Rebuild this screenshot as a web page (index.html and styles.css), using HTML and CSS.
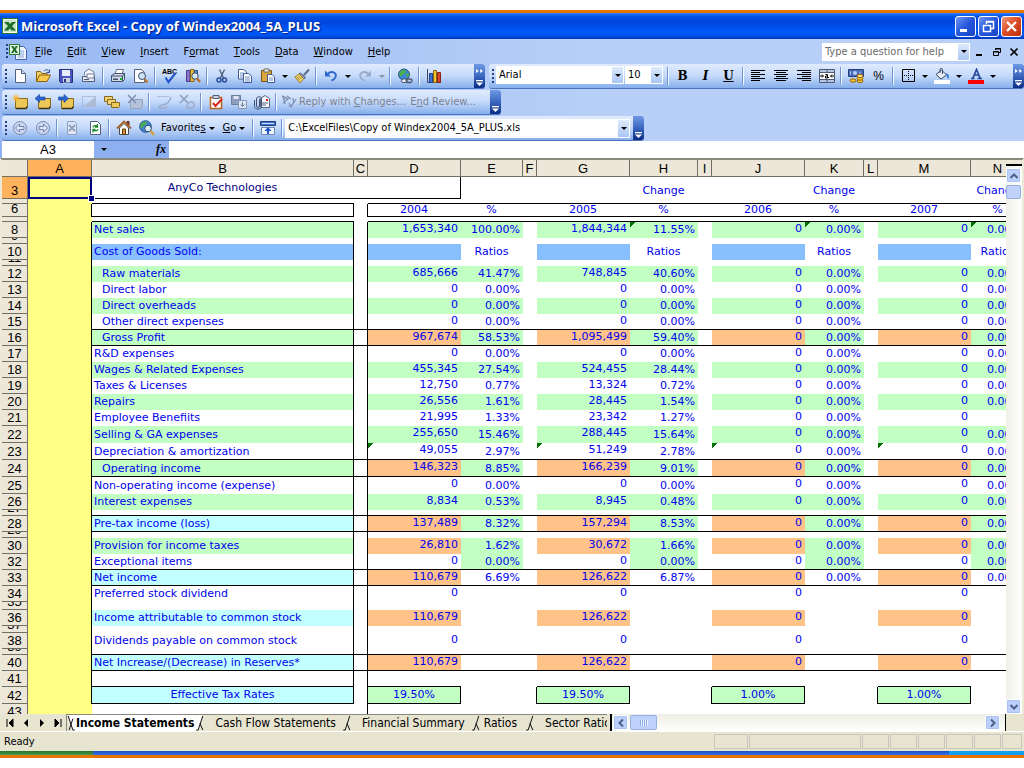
FILE: index.html
```html
<!DOCTYPE html>
<html lang="en">
<head>
    <meta charset="UTF-8">
    <meta name="viewport" content="width=device-width, initial-scale=1.0">
    <title>Microsoft Excel - Copy of Windex2004_5A_PLUS</title>
    <link rel="stylesheet" href="styles.css">
</head>
<body>

    <div class="window">
        <header class="titlebar">
            <svg class="app-icon" viewBox="0 0 16 16"><rect x="0.5" y="0.5" width="15" height="15" fill="#f4faf0" stroke="#2c7a34"/><rect x="2" y="2" width="12" height="12" fill="#c9e5c4"/><path d="M2 4h4.500l1.500 2L10 4h4l-4 4 4 4.500H9.500L8 10.500l-2 2H2l4-4.500z" fill="#1c6e2a"/></svg>
            <h1>Microsoft Excel - Copy of Windex2004_5A_PLUS</h1>
            <div class="window-buttons">
                <button type="button" aria-label="Minimize"><svg viewBox="0 0 19 19"><path d="M4 12h7v3H4z" fill="#fff"/></svg></button>
                <button type="button" aria-label="Restore"><svg viewBox="0 0 19 19"><path d="M7.500 7V4.500h7v7H12M7 5h8" fill="none" stroke="#fff" stroke-width="1.500"/><path d="M4.500 8.500h7v6h-7zM4 8.500h8" fill="none" stroke="#fff" stroke-width="1.500"/></svg></button>
                <button type="button" class="close" aria-label="Close"><svg viewBox="0 0 19 19"><path d="M5 5l9 9M14 5l-9 9" stroke="#fff" stroke-width="2.400"/></svg></button>
            </div>
        </header>

        <nav class="menubar">
            <span class="grip"></span>
            <svg class="doc-icon" viewBox="0 0 18 16"><path d="M6.500 2.500h8l3 3v10h-11z" fill="#eef4ff" stroke="#3f64a8"/><path d="M9 7h6M9 9h6M9 11h6M9 13h6" stroke="#89a5d8"/><rect x="0.500" y="0.500" width="10" height="10" fill="#e6f3e2" stroke="#2c7a34"/><path d="M2 2h2.500l1 2 1.200-2H9L6.800 5.500 9 9H6.500l-1-2-1.200 2H2l2.300-3.500z" fill="#1c6e2a"/></svg>
            <button type="button"><u>F</u>ile</button>
            <button type="button"><u>E</u>dit</button>
            <button type="button"><u>V</u>iew</button>
            <button type="button"><u>I</u>nsert</button>
            <button type="button">F<u>o</u>rmat</button>
            <button type="button"><u>T</u>ools</button>
            <button type="button"><u>D</u>ata</button>
            <button type="button"><u>W</u>indow</button>
            <button type="button"><u>H</u>elp</button>
            <div class="combo help">
                <input type="text" aria-label="Help question" placeholder="Type a question for help">
                <span class="drop"><i class="caret"></i></span>
            </div>
            <div class="doc-buttons">
                <button type="button" aria-label="Minimize workbook"><svg viewBox="0 0 10 10"><path d="M1 7h6v2H1z"/></svg></button>
                <button type="button" aria-label="Restore workbook"><svg viewBox="0 0 10 10"><path d="M3.500 3V1.500h5v4H7M3 2h6" fill="none" stroke="#000"/><path d="M1.500 4.500h5v4h-5zM1 5h6" fill="none" stroke="#000"/></svg></button>
                <button type="button" aria-label="Close workbook"><svg viewBox="0 0 10 10"><path d="M1.500 1.500l7 7M8.500 1.500l-7 7" stroke="#000" stroke-width="1.600"/></svg></button>
            </div>
        </nav>

        <div class="toolbar-row">
            <div class="toolbar standard">
                <span class="grip"></span>
                <button type="button" aria-label="New"><svg viewBox="0 0 16 16"><path d="M3.500 1.500h6l4 4v9h-10z" fill="#fff" stroke="#51617f"/><path d="M9.500 1.500v4h4" fill="#c9d6ee" stroke="#51617f"/></svg></button>
                <button type="button" aria-label="Open"><svg viewBox="0 0 16 16"><path d="M1.500 13.500v-10h4l1.500 2h5v2" fill="#f4cf63" stroke="#8a6414"/><path d="M1.500 13.500l3-6.500h11l-3.500 6.500z" fill="#fbc94b" stroke="#8a6414"/><path d="M9 3c2-2 4-1.500 5 .5M14.500 1.500v3h-3" fill="none" stroke="#35558f"/></svg></button>
                <button type="button" aria-label="Save"><svg viewBox="0 0 16 16"><path d="M1.500 1.500h13v13h-12l-1-1z" fill="#4a55c0" stroke="#26307e"/><path d="M4 2h8v6H4z" fill="#e9edfb"/><path d="M5 10h7v4.500H5z" fill="#cdd3e2"/><path d="M6 11h2v3H6z" fill="#26307e"/></svg></button>
                <button type="button" aria-label="Permission"><svg viewBox="0 0 16 16"><path d="M3.500 7V4L8 1l5 3v4" fill="#f6f8fd" stroke="#6f7d99"/><path d="M1.500 8.500h12v5h-12z" fill="#e4e8f0" stroke="#4e5c7c"/><path d="M6 6h7v4H6z" fill="#fff" stroke="#6f7d99"/><path d="M3 11.500h5" stroke="#4e5c7c"/></svg></button>
                <span class="sep"></span>
                <button type="button" aria-label="Print"><svg viewBox="0 0 16 16"><path d="M5 6l1.500-4.500h7L12 6" fill="#fff" stroke="#5c6b8a"/><path d="M1.500 7.500l3-2h10v6l-2 2h-11z" fill="#d3d9e6" stroke="#40506f"/><path d="M1.500 8h11v5.500M12.500 8l2-2.500" fill="none" stroke="#40506f"/><path d="M3 10.500h5v1.500H3z" fill="#40506f"/><path d="M10 10h2v2h-2z" fill="#18b52c"/></svg></button>
                <button type="button" aria-label="Print preview"><svg viewBox="0 0 16 16"><path d="M1.500 1.500h7l3 3v10h-10z" fill="#fff" stroke="#51617f"/><circle cx="9" cy="8" r="3.500" fill="#cfe6f7" stroke="#3a4a68"/><path d="M11.500 11l3 3.500" stroke="#b8762a" stroke-width="2.400"/></svg></button>
                <span class="sep"></span>
                <button type="button" aria-label="Spelling" class="spell"><svg viewBox="0 0 16 16"><text x="0" y="6" class="abc">ABC</text><path d="M3.500 9.500l3 4.500 7-9" fill="none" stroke="#2559cf" stroke-width="2.200"/></svg></button>
                <button type="button" aria-label="Research"><svg viewBox="0 0 16 16"><path d="M1.500 2.500h3.500v11H1.500z" fill="#8c76cb" stroke="#4a3b88"/><path d="M5.500 1.500h3.500v12H5.500z" fill="#e6c047" stroke="#8a6414"/><path d="M9.500 2.500h3v8h-3z" fill="#5c93d4" stroke="#2d4f88"/><circle cx="10" cy="8" r="3.200" fill="#d5ebf8" stroke="#3a4a68"/><path d="M12 10.500l3 3.500" stroke="#b8762a" stroke-width="2.400"/></svg></button>
                <span class="sep"></span>
                <button type="button" aria-label="Cut"><svg viewBox="0 0 16 16"><path d="M5.500 1.500L9.500 10M10.500 1.500L6.500 10" stroke="#53637f" stroke-width="1.400"/><circle cx="5" cy="12" r="2" fill="none" stroke="#2a4f9c" stroke-width="1.500"/><circle cx="10.500" cy="12" r="2" fill="none" stroke="#2a4f9c" stroke-width="1.500"/></svg></button>
                <button type="button" aria-label="Copy"><svg viewBox="0 0 16 16"><path d="M1.500 1.500h5l3 2.500v7h-8z" fill="#fff" stroke="#3c5a9a"/><path d="M3 5h4M3 7h4M3 9h3" stroke="#6d8cc9"/><path d="M6.500 5.500h5l3 2.500v6.500h-8z" fill="#fff" stroke="#3c5a9a"/><path d="M8 9h5M8 11h5M8 13h5" stroke="#6d8cc9"/></svg></button>
                <button type="button" aria-label="Paste"><svg viewBox="0 0 16 16"><path d="M1.500 2.500h10v11h-10z" fill="#dba63f" stroke="#7a5514"/><path d="M4 1h5v3H4z" fill="#f2f2e4" stroke="#666"/><path d="M7.500 6.500h4.500l2.500 2.500v5.500h-7z" fill="#fff" stroke="#3c5a9a"/><path d="M9 10h4M9 12h4" stroke="#6d8cc9"/></svg></button>
                <button type="button" class="arrow" aria-label="Paste options"><i class="caret"></i></button>
                <button type="button" aria-label="Format painter"><svg viewBox="0 0 16 16"><path d="M15 1.500L10 7" stroke="#5f6f90" stroke-width="2.200"/><path d="M6.500 5l5 4.500-1.500 1.500-5-5z" fill="#8e9ab3" stroke="#4f5d7a"/><path d="M5 6l4.500 4.500L6 15 1 9z" fill="#f6dd7c" stroke="#a37c1d"/><path d="M3 9l3 3.500M4.500 8l3 3" stroke="#a37c1d"/></svg></button>
                <span class="sep"></span>
                <button type="button" aria-label="Undo"><svg viewBox="0 0 16 16"><path d="M4.500 6c4-4 9.500-1.500 8 3-.8 2-2 3-4 3.500" fill="none" stroke="#2f66cf" stroke-width="2"/><path d="M2 2.500v6h6z" fill="#2f66cf"/></svg></button>
                <button type="button" class="arrow" aria-label="Undo list"><i class="caret"></i></button>
                <button type="button" aria-label="Redo"><svg viewBox="0 0 16 16"><path d="M11.500 6c-4-4-9.500-1.500-8 3 .8 2 2 3 4 3.500" fill="none" stroke="#9aabc9" stroke-width="2"/><path d="M14 2.500v6H8z" fill="#9aabc9"/></svg></button>
                <button type="button" class="arrow" aria-label="Redo list"><i class="caret dim"></i></button>
                <span class="sep"></span>
                <button type="button" aria-label="Hyperlink"><svg viewBox="0 0 16 16"><circle cx="7" cy="6.500" r="5.500" fill="#3f83d8" stroke="#265391"/><path d="M4 3c2-2 4-1 5 0s-1 2-2 3-3 1-3 3c-3-2-2-4 0-6zM9 6l3-1c.5 2-.5 4-2 5z" fill="#49b04d"/><rect x="4.500" y="11" width="6" height="3.500" rx="1.700" fill="#e8ecf3" stroke="#4d5970"/><rect x="9" y="11" width="6" height="3.500" rx="1.700" fill="none" stroke="#4d5970" stroke-width="1.300"/></svg></button>
                <span class="sep"></span>
                <button type="button" aria-label="Chart wizard"><svg viewBox="0 0 16 16"><path d="M1.500 1v13.500H15" fill="none" stroke="#3a4a68"/><path d="M3.500 5.500h3v9h-3z" fill="#3c6fd8" stroke="#234489"/><path d="M7.500 2.500h3v12h-3z" fill="#f2c230" stroke="#8a6414"/><path d="M11.500 4.500h3v10h-3z" fill="#d8472c" stroke="#8a2412"/></svg></button>
                <span class="cap"><i class="chevrons"></i><i class="more"></i></span>
            </div>

            <div class="toolbar formatting">
                <span class="grip"></span>
                <div class="combo font-name">
                    <select aria-label="Font"><option>Arial</option></select>
                    <span class="drop"><i class="caret"></i></span>
                </div>
                <div class="combo font-size">
                    <select aria-label="Font size"><option>10</option></select>
                    <span class="drop"><i class="caret"></i></span>
                </div>
                <span class="sep"></span>
                <button type="button" class="letter" aria-label="Bold"><b>B</b></button>
                <button type="button" class="letter" aria-label="Italic"><b><em>I</em></b></button>
                <button type="button" class="letter" aria-label="Underline"><b><u>U</u></b></button>
                <span class="sep"></span>
                <button type="button" aria-label="Align left"><svg viewBox="0 0 16 16"><path d="M1 2.500h14M1 4.500h9M1 6.500h14M1 8.500h9M1 10.500h14M1 12.500h9" stroke="#000"/></svg></button>
                <button type="button" aria-label="Center"><svg viewBox="0 0 16 16"><path d="M1 2.500h14M3 4.500h10M1 6.500h14M3 8.500h10M1 10.500h14M3 12.500h10" stroke="#000"/></svg></button>
                <button type="button" aria-label="Align right"><svg viewBox="0 0 16 16"><path d="M1 2.500h14M6 4.500h9M1 6.500h14M6 8.500h9M1 10.500h14M6 12.500h9" stroke="#000"/></svg></button>
                <button type="button" aria-label="Merge and center"><svg viewBox="0 0 16 16"><path d="M.5 1.500h15v13H.5z" fill="#fff" stroke="#4c5a78"/><path d="M1 2h14v2H1zM1 12h14v2H1z" fill="#b4c6e6"/><path d="M0 4.500h16M0 11.500h16M8 1v3M8 12v3" stroke="#4c5a78"/><path d="M1 8h3M12 8h3M3 6.500L4.500 8 3 9.500M13 6.500L11.500 8l1.500 1.500" fill="none" stroke="#000"/><path d="M6.500 6.500h2v3.500h-2V8h2M8.500 9.500H10" fill="none" stroke="#000"/></svg></button>
                <span class="sep"></span>
                <button type="button" aria-label="Currency"><svg viewBox="0 0 16 16"><path d="M.5 1.500h15v7H.5z" fill="#486bb8" stroke="#24407e"/><circle cx="7" cy="5" r="2" fill="#b9cdf2"/><path d="M2.500 3.500v3M12 3.500v3" stroke="#b9cdf2"/><ellipse cx="12" cy="13" rx="3" ry="1.700" fill="#f5c231" stroke="#93660f"/><ellipse cx="12" cy="10.500" rx="3" ry="1.700" fill="#f5c231" stroke="#93660f"/><ellipse cx="12" cy="8" rx="3" ry="1.700" fill="#ffe07a" stroke="#93660f"/><ellipse cx="5" cy="12.500" rx="3" ry="1.700" fill="#f5c231" stroke="#93660f"/></svg></button>
                <button type="button" class="percent" aria-label="Percent style">%</button>
                <span class="sep"></span>
                <button type="button" aria-label="Borders"><svg viewBox="0 0 16 16"><path d="M2.500 1.500h12v12h-12z" fill="none" stroke="#000"/><path d="M4 7.500h10M8.500 3v10" stroke="#000" stroke-dasharray="1 1"/></svg></button>
                <button type="button" class="arrow" aria-label="Border list"><i class="caret"></i></button>
                <button type="button" aria-label="Fill color"><svg viewBox="0 0 16 16"><path d="M2 6.500l5.500-4.500 5 5L7 11z" fill="#e8eef8" stroke="#3a4a68"/><path d="M6 5V1.500c0-1.500 2.500-1.500 2.500 0V6" fill="none" stroke="#3a4a68"/><path d="M12 5c3 1 3.500 3 2.500 6-1-1-2-2-2-4z" fill="#3c7ad8"/><path d="M0 12h16v4H0z" fill="#fff"/></svg></button>
                <button type="button" class="arrow" aria-label="Fill color list"><i class="caret"></i></button>
                <button type="button" aria-label="Font color"><svg viewBox="0 0 16 16"><path d="M3 10.500h3.500M9.500 10.500H14M5 10L8.500 1.500 12 10M6 7h5" fill="none" stroke="#27479a" stroke-width="1.700"/><path d="M0 12h16v4H0z" fill="#f00"/></svg></button>
                <button type="button" class="arrow" aria-label="Font color list"><i class="caret"></i></button>
                <span class="cap"><i class="chevrons"></i><i class="more"></i></span>
            </div>
        </div>

        <div class="toolbar-row">
            <div class="toolbar reviewing">
                <span class="grip"></span>
                <button type="button" aria-label="New comment"><svg viewBox="0 0 16 16"><path d="M3.500 4.500h12v8l-2 2h-10z" fill="#ecc858" stroke="#8a6a1c"/><path d="M4 14.500h10l1.500-2" fill="none" stroke="#3c300c" stroke-width="1.500"/><path d="M4 0v8M0 4h8M1.500 1.500l5 5M6.500 1.500l-5 5" stroke="#ffb326"/></svg></button>
                <button type="button" aria-label="Previous comment"><svg viewBox="0 0 16 16"><path d="M3.500 4.500h12v8l-2 2h-10z" fill="#ecc858" stroke="#8a6a1c"/><path d="M4 14.500h10l1.500-2" fill="none" stroke="#3c300c" stroke-width="1.500"/><path d="M0 4.500L4.500.5v2.500H10v3H4.500v2.500z" fill="#2c68d8" stroke="#16418f" stroke-width=".6"/></svg></button>
                <button type="button" aria-label="Next comment"><svg viewBox="0 0 16 16"><path d="M3.500 4.500h12v8l-2 2h-10z" fill="#ecc858" stroke="#8a6a1c"/><path d="M4 14.500h10l1.500-2" fill="none" stroke="#3c300c" stroke-width="1.500"/><path d="M10.500 4.500L6 .5v2.500H.5v3H6v2.500z" fill="#2c68d8" stroke="#16418f" stroke-width=".6"/></svg></button>
                <button type="button" disabled aria-label="Show comment"><svg viewBox="0 0 16 16"><path d="M1.500 2.500h13v10h-13z" fill="none" stroke="#8d9dbd" stroke-dasharray="1 1"/><path d="M2 13L14 3v10z" fill="#aebbd4"/></svg></button>
                <button type="button" aria-label="Show all comments"><svg viewBox="0 0 16 16"><path d="M.5 2.500h8v4l-1 1h-7z" fill="#f2d374" stroke="#8a6a1c"/><path d="M3.500 5.500h8v4l-1 1h-7z" fill="#f2d374" stroke="#8a6a1c"/><path d="M7.500 8.500h8v4l-1 1h-7z" fill="#ecc858" stroke="#8a6a1c"/></svg></button>
                <button type="button" disabled aria-label="Delete comment"><svg viewBox="0 0 16 16"><path d="M3.500 5.500h12v7l-2 2h-10z" fill="#b6c2da" stroke="#93a2c0"/><path d="M1 1l8 8M9 1L1 9" stroke="#7f8fb0" stroke-width="1.500"/></svg></button>
                <span class="sep"></span>
                <button type="button" disabled aria-label="Show ink"><svg viewBox="0 0 16 16"><path d="M1.500 2.500h12" stroke="#8d9dbd" stroke-dasharray="1 1"/><path d="M15 3c-1 4-4 7-8 8-4 0-6 3-2 3 3 0 7 0 5-2" fill="none" stroke="#9fadc9" stroke-width="1.400"/></svg></button>
                <button type="button" disabled aria-label="Delete ink"><svg viewBox="0 0 16 16"><path d="M1 1l8 8M9 1L1 9" stroke="#8d9dbd" stroke-width="1.500"/><path d="M8 12c2-6 7-5 7-1 0 3-4 4-8 2" fill="none" stroke="#9fadc9" stroke-width="1.500"/></svg></button>
                <span class="sep"></span>
                <button type="button" aria-label="Create task"><svg viewBox="0 0 16 16"><path d="M2.500 3.500h11v11h-11z" fill="#fff" stroke="#b8651f" stroke-width="1.500"/><path d="M5 1.500h6v3H5z" fill="#c9d2e4" stroke="#52617f"/><path d="M5 9l2.500 3L14 5" fill="none" stroke="#d8261c" stroke-width="2"/></svg></button>
                <button type="button" disabled aria-label="Update file"><svg viewBox="0 0 16 16"><path d="M.5 1.500h9v9h-9z" fill="#8f9fc0" stroke="#6d7d9f"/><path d="M2.500 2h5v3h-5z" fill="#dfe6f3"/><path d="M7.500 6.500h8v8h-8z" fill="#dfe6f3" stroke="#8797b8"/><path d="M11.500 8v4M9.500 10.500l2 2 2-2" fill="none" stroke="#6d7d9f"/></svg></button>
                <button type="button" aria-label="Send as attachment"><svg viewBox="0 0 16 16"><path d="M6.500 4.500l4.500-3 4.500 3v9h-9z" fill="#f4f7fd" stroke="#5a6987"/><path d="M8 9h6M8 11h4" stroke="#5a6987"/><path d="M12 5h2v2h-2z" fill="#d8261c"/><path d="M5.500 5v7c0 2-3 2-3 0V5c0-3 5-3 5 0v7.500c0 3.500-7 3.500-7 0V6" fill="none" stroke="#44516e"/></svg></button>
                <span class="sep"></span>
                <button type="button" class="text" disabled><svg viewBox="0 0 16 16"><path d="M1 2l6 3-5 4M2 2l2 8M6 2l4 3" fill="none" stroke="#8594b2" stroke-width="1.500"/><path d="M8 12c5 0 5-4 4-8M8 9l2 4 5-8" fill="none" stroke="#8594b2" stroke-width="1.300"/></svg><span>Reply with <u>C</u>hanges...</span></button>
                <button type="button" class="text" disabled><span>E<u>n</u>d Review...</span></button>
                <span class="cap"><i class="more"></i></span>
            </div>
        </div>

        <div class="toolbar-row">
            <div class="toolbar web">
                <span class="grip"></span>
                <button type="button" disabled aria-label="Back"><svg viewBox="0 0 16 16"><circle cx="8" cy="8" r="6.500" fill="#cbd8ef" stroke="#7a8bb0"/><path d="M3.500 8l4-4v2.500H12v3H7.500V12z" fill="#dce6f7" stroke="#7182a8"/></svg></button>
                <button type="button" disabled aria-label="Forward"><svg viewBox="0 0 16 16"><circle cx="8" cy="8" r="6.500" fill="#cbd8ef" stroke="#7a8bb0"/><path d="M12.500 8l-4-4v2.500H4v3h4.500V12z" fill="#dce6f7" stroke="#7182a8"/></svg></button>
                <span class="sep"></span>
                <button type="button" disabled aria-label="Stop"><svg viewBox="0 0 16 16"><path d="M3.500 1.500h7l2 2v11h-9z" fill="#dde6f5" stroke="#8f9fc0"/><path d="M5 5l6 6M11 5l-6 6" stroke="#8f9fc0" stroke-width="1.800"/></svg></button>
                <button type="button" aria-label="Refresh"><svg viewBox="0 0 16 16"><path d="M3.500 1.500h7l3 3v10h-10z" fill="#fff" stroke="#51617f"/><path d="M6 7.500c0-2 3-2.500 4.500-1M10.500 4v3H8M11 9c0 2-3 2.500-4.500 1M6 12.500v-3h2.500" fill="none" stroke="#1f8a2c" stroke-width="1.300"/></svg></button>
                <span class="sep"></span>
                <button type="button" aria-label="Home"><svg viewBox="0 0 16 16"><path d="M11 1.500h2v4h-2z" fill="#b5482b" stroke="#5c2310"/><path d="M3.500 8v6.500h9V8L8 3.500z" fill="#fff" stroke="#4a4a4a"/><path d="M1 8.500l7-7 7 7" fill="none" stroke="#a8632a" stroke-width="1.800"/><path d="M6.500 9h3v5.500h-3z" fill="#d98c2b" stroke="#5c3a10"/></svg></button>
                <button type="button" aria-label="Search the Web"><svg viewBox="0 0 16 16"><circle cx="6.500" cy="6.500" r="5.800" fill="#3f83d8" stroke="#265391"/><path d="M2 4c2-3 5-3 6-2s-1 2-2 3-3 1-2.500 4C1 8 1 6 2 4z" fill="#49b04d"/><circle cx="9" cy="8.500" r="3.300" fill="#d8effa" stroke="#39485f"/><path d="M11.500 11l3.500 4" stroke="#d2a035" stroke-width="2.400"/></svg></button>
                <button type="button" class="text"><span>Favorite<u>s</u></span><i class="caret"></i></button>
                <button type="button" class="text wide"><span><u>G</u>o</span><i class="caret"></i></button>
                <span class="sep"></span>
                <button type="button" aria-label="Show only Web toolbar"><svg viewBox="0 0 16 16"><path d="M.5 1.500h15v4H.5z" fill="#3c6fd0" stroke="#24407e"/><path d="M2 3.500h12" stroke="#cfdef8"/><path d="M1.500 7.500h13v7h-13z" fill="#eef4ff" stroke="#6e88bd"/><path d="M8 7l3.500 4H9v3H7v-3H4.500z" fill="#1f55c4"/></svg></button>
                <span class="sep"></span>
                <div class="combo address">
                    <input type="text" aria-label="Address" value="C:\ExcelFiles\Copy of Windex2004_5A_PLUS.xls">
                    <span class="drop"><i class="caret"></i></span>
                </div>
                <span class="cap"><i class="more"></i></span>
            </div>
        </div>

        <div class="formula-bar">
            <input type="text" class="name-box" aria-label="Name box" value="A3">
            <button type="button" class="name-list" aria-label="Names"><i class="caret"></i></button>
            <button type="button" class="fx" aria-label="Insert function"><em>fx</em></button>
            <input type="text" class="formula" aria-label="Formula">
        </div>

        <main class="workbook">
            <div class="sheet">
                <table>
                    <colgroup>
                        <col class="head"><col class="a"><col class="b"><col class="gap"><col class="amount"><col class="e"><col class="gap"><col class="amount"><col class="h"><col class="gap"><col class="amount"><col class="k"><col class="gap"><col class="amount"><col class="n">
                    </colgroup>
                    <thead>
                        <tr><th></th><th class="active">A</th><th>B</th><th>C</th><th>D</th><th>E</th><th>F</th><th>G</th><th>H</th><th>I</th><th>J</th><th>K</th><th>L</th><th>M</th><th>N</th></tr>
                    </thead>
                    <tbody id="rows"></tbody>
                </table>
            </div>
            <div class="vscroll">
                <span class="split"></span>
                <button type="button" class="scroll-button" aria-label="Scroll up"><svg viewBox="0 0 10 10"><path d="M1.500 7L5 3.500 8.500 7" fill="none" stroke="#4d6185" stroke-width="2"/></svg></button>
                <span class="thumb"></span>
                <button type="button" class="scroll-button last" aria-label="Scroll down"><svg viewBox="0 0 10 10"><path d="M1.500 3L5 6.500 8.500 3" fill="none" stroke="#4d6185" stroke-width="2"/></svg></button>
            </div>
        </main>

        <div class="tab-row">
            <div class="tab-nav">
                <button type="button" aria-label="First sheet"><svg viewBox="0 0 10 10"><path d="M2 1v8M8 1v8L4 5z" stroke="#000"/></svg></button>
                <button type="button" aria-label="Previous sheet"><svg viewBox="0 0 10 10"><path d="M7 1v8L3 5z"/></svg></button>
                <button type="button" aria-label="Next sheet"><svg viewBox="0 0 10 10"><path d="M3 1v8l4-4z"/></svg></button>
                <button type="button" aria-label="Last sheet"><svg viewBox="0 0 10 10"><path d="M8 1v8M2 1v8l4-4z" stroke="#000"/></svg></button>
            </div>
            <div class="tabs">
                <svg class="edge" viewBox="0 0 8 17"><path d="M0 0h8v17H6z" fill="#fff"/><path d="M1 1l5 15h2M6 4L2 16" fill="none" stroke="#000"/></svg>
                <button type="button" class="tab current">Income Statements</button>
                <svg class="edge" viewBox="0 0 8 17"><path d="M0 0h7L2 16H0z" fill="#fff"/><path d="M7 1L2 16H0M4 9l3 7" fill="none" stroke="#000"/></svg>
                <button type="button" class="tab">Cash Flow Statements</button>
                <svg class="edge" viewBox="0 0 8 17"><path d="M7 1L2 16H0M4 9l3 7" fill="none" stroke="#000"/></svg>
                <button type="button" class="tab">Financial Summary</button>
                <svg class="edge" viewBox="0 0 8 17"><path d="M7 1L2 16H0M4 9l3 7" fill="none" stroke="#000"/></svg>
                <button type="button" class="tab narrow">Ratios</button>
                <svg class="edge" viewBox="0 0 8 17"><path d="M7 1L2 16H0M4 9l3 7" fill="none" stroke="#000"/></svg>
                <button type="button" class="tab">Sector Ratios</button>
            </div>
            <div class="hscroll">
                <button type="button" class="scroll-button" aria-label="Scroll left"><svg viewBox="0 0 10 10"><path d="M7 1.500L3.500 5 7 8.500" fill="none" stroke="#4d6185" stroke-width="2"/></svg></button>
                <span class="thumb"></span>
                <button type="button" class="scroll-button last" aria-label="Scroll right"><svg viewBox="0 0 10 10"><path d="M3 1.500L6.500 5 3 8.500" fill="none" stroke="#4d6185" stroke-width="2"/></svg></button>
            </div>
            <span class="corner"></span>
        </div>

        <footer class="status">
            <span class="message">Ready</span>
            <span class="pane short"></span><span class="pane long"></span><span class="pane"></span><span class="pane"></span><span class="pane"></span><span class="pane"></span><span class="pane"></span><span class="pane last"></span>
        </footer>
        <div class="taskbar"><span class="start"></span><span class="tray"></span></div>
    </div>

    <script src="sheet.js"></script>
</body>
</html>
```
FILE: styles.css
```css
* {
    box-sizing: border-box;
}

body {
    margin: 0;
    padding: 10px 0;
    height: 100vh;
    background: #fff;
    font: 11px/14px "DejaVu Sans Condensed", "DejaVu Sans", sans-serif;
    color: #000;
}

button, input, select {
    font: inherit;
    color: inherit;
    margin: 0;
    padding: 0;
    border: none;
    border-radius: 0;
    background: none;
    outline: none;
}

button {
    display: flex;
    align-items: center;
    justify-content: center;
    white-space: nowrap;
}

button u {
    text-underline-offset: 1px;
}

svg {
    display: block;
    flex: none;
}

.window {
    height: 100%;
    display: flex;
    flex-direction: column;
    overflow: hidden;
    border-top: 3px solid #e87400;
    border-bottom: 3px solid #e87400;
    background: #b8d0f7;
}

/* title bar */
.titlebar {
    flex: none;
    height: 26px;
    display: flex;
    align-items: center;
    padding: 0 2px;
    gap: 3px;
    background: linear-gradient(#2a82ff, #0353e8 3px, #0044dd 9px, #0058fa 18px, #0056f4 22px, #0036b8);
}

.app-icon {
    width: 16px;
    height: 16px;
}

h1 {
    flex: 1;
    margin: 0;
    font: bold 13px/20px "Open Sans", "Noto Sans", sans-serif;
    color: #fff;
    text-shadow: 1px 1px 1px #0a1f80;
    white-space: nowrap;
}

.window-buttons {
    display: flex;
    gap: 2px;
}

.window-buttons button {
    width: 21px;
    height: 21px;
    border: 1px solid #fff;
    border-radius: 3px;
    background: linear-gradient(135deg, #6f97f2, #2456dc 50%, #1b45c4);
}

.window-buttons .close {
    background: linear-gradient(135deg, #f09a7c, #dc4a22 50%, #bb300c);
}

.window-buttons svg {
    width: 19px;
    height: 19px;
}

/* menu bar */
.menubar {
    flex: none;
    height: 25px;
    display: flex;
    align-items: center;
    padding: 0 5px 0 4px;
    background: linear-gradient(90deg, #98b8f4, #b8d0f7 60%);
}

.menubar > button {
    padding: 0 7px 0 8px;
    height: 20px;
}

.doc-icon {
    width: 18px;
    height: 16px;
}

.grip {
    flex: none;
    width: 5px;
    height: 15px;
    background: repeating-linear-gradient(#27417d 0 2px, transparent 2px 4px);
    background-size: 2px 100%;
    background-position: 2px 0;
    background-repeat: no-repeat;
}

.combo {
    display: flex;
    padding: 1px;
    height: 18px;
    background: #fff;
}

.combo input, .combo select {
    flex: 1;
    min-width: 0;
    padding: 0 2px;
    appearance: none;
}

.drop {
    flex: none;
    width: 11px;
    display: flex;
    align-items: center;
    justify-content: center;
    background: linear-gradient(#dfeafc, #a9c6f4);
}

.caret {
    flex: none;
    width: 0;
    height: 0;
    border: 3px solid transparent;
    border-top-color: #000;
    border-bottom: none;
}

.caret.dim {
    border-top-color: #8a94a8;
}

.help {
    width: 148px;
    margin-left: auto;
}

.help input::placeholder {
    color: #6a6a6a;
    opacity: 1;
}

.doc-buttons {
    display: flex;
    gap: 7px;
    padding-left: 5px;
}

.doc-buttons svg {
    width: 10px;
    height: 10px;
}

/* toolbars */
.toolbar-row {
    flex: none;
    display: flex;
    gap: 4px;
    padding-left: 2px;
    background: linear-gradient(90deg, #98b8f4, #b8d0f7 60%);
}

.toolbar-row + .toolbar-row {
    padding-top: 1px;
}

.toolbar {
    height: 25px;
    display: flex;
    align-items: center;
    padding-left: 1px;
    border-radius: 3px;
    border-bottom: 1px solid #4a74bf;
    background: linear-gradient(#e0ebfd, #c4d9fa 50%, #86aeec);
}

.toolbar button {
    flex: none;
    width: 23px;
    height: 22px;
}

.toolbar svg {
    width: 16px;
    height: 16px;
}

.toolbar .arrow {
    width: 11px;
}

.toolbar .text {
    width: auto;
    padding: 0 3px;
    gap: 3px;
}

.toolbar .wide {
    padding: 0 5px;
}

.toolbar .text:disabled {
    padding: 0 2px;
    gap: 2px;
    color: #7d8290;
}

.standard {
    width: 483px;
}

.formatting {
    flex: 1;
}

.reviewing {
    width: 499px;
}

.web {
    width: 642px;
}

.abc {
    font: bold 7px "Liberation Sans", sans-serif;
}

.toolbar .letter {
    font: 12px/16px "DejaVu Serif", serif;
}

.toolbar .percent {
    font: 12px/16px "Liberation Sans", sans-serif;
}

.sep {
    flex: none;
    width: 6px;
    height: 18px;
    border-left: 2px solid transparent;
    background: linear-gradient(90deg, #6f94d6 1px, #f4f8ff 1px 2px, transparent 2px);
}

.font-name {
    width: 128px;
    margin: 0 1px 2px 1px;
}

.font-size {
    width: 38px;
    margin: 0 2px 2px 0;
}

.address {
    flex: 1;
    margin-right: 3px;
    height: 19px;
}

.cap {
    align-self: stretch;
    flex: none;
    width: 11px;
    margin-left: auto;
    display: flex;
    flex-direction: column;
    align-items: center;
    justify-content: flex-end;
    gap: 7px;
    padding-bottom: 2px;
    border-radius: 0 3px 3px 0;
    background: linear-gradient(#6f98e4, #3a67c0 50%, #0a2c84);
}

.chevrons {
    width: 7px;
    height: 4px;
    background: #fff;
    clip-path: polygon(0 0, 40% 50%, 0 100%, 0 0, 60% 0, 100% 50%, 60% 100%, 60% 0);
}

.more {
    width: 7px;
    height: 6px;
    background: #fff;
    clip-path: polygon(0 0, 100% 0, 100% 20%, 0 20%, 0 40%, 100% 40%, 50% 100%, 0 40%);
}

/* formula bar */
.formula-bar {
    flex: none;
    height: 17px;
    display: flex;
    padding-left: 2px;
    background: #8fb0f0;
}

.name-box {
    width: 92px;
    background: #fff;
    text-align: center;
    font: 13px/16px "Liberation Sans", sans-serif;
}

.name-list {
    width: 19px;
}

.fx {
    width: 56px;
    padding-right: 3px;
    justify-content: flex-end;
    font: bold 12px "Liberation Serif", serif;
}

.formula {
    flex: 1;
    background: #fff;
}

/* sheet */
.workbook {
    flex: 1;
    min-height: 0;
    display: flex;
    border: 2px solid #ece9d8;
    border-top-color: #8a887c;
    border-bottom: none;
    background: #fff;
}

.sheet {
    flex: 1;
    min-width: 0;
    overflow: hidden;
}

table {
    width: 1023px;
    table-layout: fixed;
    border-collapse: separate;
    border-spacing: 0;
}

.head { width: 26px; }
.a { width: 64px; }
.b { width: 262px; }
.gap { width: 14px; }
.amount { width: 93px; }
.e { width: 62px; }
.h { width: 68px; }
.k { width: 59px; }
.n { width: 54px; }

th {
    padding: 0;
    border-right: 1px solid #716f64;
    border-bottom: 1px solid #716f64;
    background: #ece7d8;
    font: 13px/15px "Liberation Sans", sans-serif;
}

thead th {
    height: 17px;
}

th.active {
    background: #ffb25c;
}

th span {
    display: flex;
    align-items: flex-end;
    justify-content: center;
    overflow: hidden;
}

/* cell lines are shadows, so that they meet without gaps at the corners */
td {
    --right: transparent;
    --bottom: transparent;
    padding: 0 3px 0 2px;
    box-shadow: inset -1px 0 var(--right), inset 0 -1px var(--bottom);
    font: 11px/12px "DejaVu Sans", sans-serif;
    color: #0000f0;
    text-align: right;
    vertical-align: bottom;
    white-space: nowrap;
}

td.filled {
    padding: 1px 3px 2px 2px;
}

.tight td.filled {
    padding: 0 3px 1px 2px;
}

td.col-a {
    background: #ffff84;
}

td.col-b {
    text-align: left;
}

td.amount-cell {
    vertical-align: top;
}

td.col-b.indent {
    padding-left: 10px;
}

td.center {
    text-align: center;
    vertical-align: middle;
}

td.change {
    text-align: center;
}

td.title {
    color: #000080;
}

td.green { background-color: #c2ffc2; }
td.blue { background-color: #88c0ff; }
td.cyan { background-color: #c2ffff; }
td.orange { background-color: #ffc288; }

td.right { --right: #000; }
td.bottom { --bottom: #000; }

td.flag {
    background-image: linear-gradient(135deg, #007000 4px, transparent 4px);
    background-size: 7px 7px;
    background-repeat: no-repeat;
}

td.selected {
    position: relative;
    box-shadow: inset 0 0 0 2px #000080;
}

td.selected::after {
    content: "";
    position: absolute;
    right: -3px;
    bottom: -3px;
    width: 5px;
    height: 5px;
    border: 1px solid #fff;
    background: #000080;
}

/* scroll bars */
.vscroll {
    flex: none;
    width: 16px;
    display: flex;
    flex-direction: column;
    gap: 2px;
    background: linear-gradient(90deg, #f0efe8, #fefefb);
}

.split {
    height: 6px;
    border-bottom: 2px solid #000;
    background: #ece9d8;
}

.scroll-button {
    flex: none;
    width: 15px;
    height: 15px;
    border: 1px solid #fff;
    border-radius: 2px;
    background: #bcd0fb;
    box-shadow: inset 0 0 0 1px #a9c0f2;
}

.scroll-button svg {
    width: 10px;
    height: 10px;
}

.vscroll .last {
    margin-top: auto;
}

.thumb {
    border: 1px solid #98b1e4;
    border-radius: 2px;
    background: #c0d2fc;
}

.vscroll .thumb {
    width: 15px;
    height: 14px;
}

.tab-row {
    flex: none;
    height: 17px;
    display: flex;
    padding: 0 2px;
    background: #e7e4d0;
}

.tab-nav {
    flex: none;
    width: 65px;
    display: flex;
    align-items: center;
    justify-content: space-around;
    border-right: 1px solid #8a887c;
}

.tab-nav svg {
    width: 10px;
    height: 10px;
}

.tabs {
    flex: none;
    width: 540px;
    display: flex;
    overflow: hidden;
    border-top: 1px solid #8a887c;
}

.edge {
    width: 8px;
    height: 16px;
}

.tab {
    flex: none;
    height: 16px;
    padding: 0 7px 0 11px;
    font-size: 12px;
}

.tab.narrow {
    padding: 0 9px 0 4px;
}

.tab.current {
    padding: 0 2px 0 1px;
    background: #fff;
    font-weight: bold;
}

.hscroll {
    flex: 1;
    display: flex;
    align-items: center;
    gap: 2px;
    padding: 0 5px 0 1px;
    margin-left: 3px;
    border-left: 2px solid #000;
    background: linear-gradient(#eeeee6, #fefefb);
}

.hscroll .thumb {
    width: 27px;
    height: 15px;
    background: #c0d2fc repeating-linear-gradient(90deg, #8fabe6 0 1px, #eef4fe 1px 2px) center / 8px 6px no-repeat;
}

.hscroll .last {
    margin-left: auto;
}

.corner {
    flex: none;
    width: 17px;
    border-left: 1px solid #000;
}

/* status bar */
.status {
    flex: none;
    height: 20px;
    display: flex;
    align-items: center;
    gap: 1px;
    padding: 0 2px;
    border-top: 1px solid #fff;
    background: #e7e4d0;
}

.message {
    flex: 1;
    padding: 2px;
}

.pane {
    width: 27px;
    height: 15px;
    border: 1px solid #c9c7bd;
}

.pane.short { width: 34px; }
.pane.long { width: 112px; }
.pane.last { width: 20px; }

.taskbar {
    flex: none;
    height: 4px;
    display: flex;
    justify-content: space-between;
    background: linear-gradient(#1d4fc0, #2f74ea);
}

.start {
    width: 93px;
    background: linear-gradient(#2c6e2c, #47a047);
}

.tray {
    width: 75px;
    background: #12a0f0;
}
```
FILE: sheet.js
```javascript
const columns = ['A', 'B', 'C', 'D', 'E', 'F', 'G', 'H', 'I', 'J', 'K', 'L', 'M', 'N'];
const amounts = ['D', 'G', 'J', 'M'];
const ratios = ['E', 'H', 'K', 'N'];

// number, height, label, fills for [label, amount, ratio], amounts, ratios
const rows = [
    [3, 22, 'AnyCo Technologies', [], [], ['', 'Change', 'Change', 'Change']],
    [4, 5],
    [6, 13, '', [], ['2004', '2005', '2006', '2007'], ['%', '%', '%', '%']],
    [7, 5],
    [8, 16, 'Net sales', ['green', 'green', 'green'], ['1,653,340', '1,844,344', '0', '0'], ['100.00%', '11.55%', '0.00%', '0.00%']],
    [9, 6],
    [10, 16, 'Cost of Goods Sold:', ['blue', 'blue', ''], [], ['Ratios', 'Ratios', 'Ratios', 'Ratios']],
    [11, 6],
    [12, 16, 'Raw materials', ['green', 'green', 'green'], ['685,666', '748,845', '0', '0'], ['41.47%', '40.60%', '0.00%', '0.00%']],
    [13, 16, 'Direct labor', [], ['0', '0', '0', '0'], ['0.00%', '0.00%', '0.00%', '0.00%']],
    [14, 16, 'Direct overheads', ['green', 'green', 'green'], ['0', '0', '0', '0'], ['0.00%', '0.00%', '0.00%', '0.00%']],
    [15, 16, 'Other direct expenses', [], ['0', '0', '0', '0'], ['0.00%', '0.00%', '0.00%', '0.00%']],
    [16, 16, 'Gross Profit', ['green', 'orange', 'green'], ['967,674', '1,095,499', '0', '0'], ['58.53%', '59.40%', '0.00%', '0.00%']],
    [17, 16, 'R&D expenses', [], ['0', '0', '0', '0'], ['0.00%', '0.00%', '0.00%', '0.00%']],
    [18, 16, 'Wages & Related Expenses', ['green', 'green', 'green'], ['455,345', '524,455', '0', '0'], ['27.54%', '28.44%', '0.00%', '0.00%']],
    [19, 16, 'Taxes & Licenses', [], ['12,750', '13,324', '0', '0'], ['0.77%', '0.72%', '0.00%', '0.00%']],
    [20, 16, 'Repairs', ['green', 'green', 'green'], ['26,556', '28,445', '0', '0'], ['1.61%', '1.54%', '0.00%', '0.00%']],
    [21, 16, 'Employee Benefiits', [], ['21,995', '23,342', '0', '0'], ['1.33%', '1.27%', '0.00%', '']],
    [22, 17, 'Selling & GA expenses', ['green', 'green', 'green'], ['255,650', '288,445', '0', '0'], ['15.46%', '15.64%', '0.00%', '0.00%']],
    [23, 17, 'Depreciation & amortization', [], ['49,055', '51,249', '0', '0'], ['2.97%', '2.78%', '0.00%', '0.00%']],
    [24, 17, 'Operating income', ['green', 'orange', 'green'], ['146,323', '166,239', '0', '0'], ['8.85%', '9.01%', '0.00%', '0.00%']],
    [25, 17, 'Non-operating income (expense)', [], ['0', '0', '0', '0'], ['0.00%', '0.00%', '0.00%', '0.00%']],
    [26, 16, 'Interest expenses', ['green', 'green', 'green'], ['8,834', '8,945', '0', '0'], ['0.53%', '0.48%', '0.00%', '0.00%']],
    [27, 6],
    [28, 16, 'Pre-tax income (loss)', ['cyan', 'orange', 'green'], ['137,489', '157,294', '0', '0'], ['8.32%', '8.53%', '0.00%', '0.00%']],
    [29, 6],
    [30, 16, 'Provision for income taxes', ['green', 'orange', 'green'], ['26,810', '30,672', '0', '0'], ['1.62%', '1.66%', '0.00%', '0.00%']],
    [32, 16, 'Exceptional items', ['', '', 'green'], ['0', '0', '0', '0'], ['0.00%', '0.00%', '0.00%', '0.00%']],
    [33, 16, 'Net income', ['cyan', 'orange', ''], ['110,679', '126,622', '0', '0'], ['6.69%', '6.87%', '0.00%', '0.00%']],
    [34, 16, 'Preferred stock dividend', [], ['0', '0', '0', '0']],
    [35, 8],
    [36, 16, 'Income attributable to common stock', ['cyan', 'orange', ''], ['110,679', '126,622', '0', '0']],
    [37, 7],
    [38, 16, 'Dividends payable on common stock', [], ['0', '0', '0', '0']],
    [39, 6],
    [40, 16, 'Net Increase/(Decrease) in Reserves*', ['cyan', 'orange', ''], ['110,679', '126,622', '0', '0']],
    [41, 16],
    [42, 17, 'Effective Tax Rates', ['cyan', 'green', ''], ['19.50%', '19.50%', '1.00%', '1.00%']],
    [43, 16]
];

const indented = [12, 13, 14, 15, 16, 24];
const ruled = [15, 16, 23, 24, 27, 28, 32, 33, 39, 40];

function hasRight(n, col) {
    if (n === 3) return col === 'A' || col === 'D';
    if (n === 6) return ['A', 'B', 'C'].includes(col);
    if (n === 42 && !['E', 'H', 'K', 'N'].includes(col)) return true;
    if (col === 'C') return n >= 8;
    return (col === 'A' || col === 'B') && n >= 8 && n <= 42;
}

function hasBottom(n, col) {
    if (col === 'A') return false;
    if (n === 3) return ['B', 'C', 'D'].includes(col);
    if ([4, 6, 7].includes(n)) return col !== 'C';
    if (n === 41 || n === 42) return col === 'B' || amounts.includes(col);
    return ruled.includes(n);
}

function isFlagged(n, col) {
    return (n === 8 && ['H', 'K', 'N'].includes(col)) || (n === 23 && amounts.includes(col));
}

const body = document.getElementById('rows');

rows.forEach(([n, height, label = '', fills = [], amountValues = [], ratioValues = []]) => {
    const tr = document.createElement('tr');
    if (n === 6) tr.className = 'tight';

    const th = document.createElement('th');
    const span = document.createElement('span');
    // a row this low has no room for its number
    span.textContent = height > 5 ? n : '';
    span.style.height = (height - 1) + 'px';
    if (n === 3) th.className = 'active';
    th.appendChild(span);
    tr.appendChild(th);

    columns.forEach(col => {
        const td = document.createElement('td');
        const classes = [];
        let text = '';
        let fill = '';

        if (col === 'A') {
            classes.push('col-a');
            if (n === 3) classes.push('selected');
        } else if (col === 'B') {
            text = label;
            fill = fills[0];
            classes.push('col-b');
            if (indented.includes(n)) classes.push('indent');
            if (n === 3) classes.push('title');
            if (n === 3 || n === 42) classes.push('center');
        } else if (amounts.includes(col)) {
            text = amountValues[amounts.indexOf(col)] || '';
            fill = fills[1];
            classes.push('amount-cell');
            if (n === 6 || n === 42) classes.push('center');
        } else if (ratios.includes(col)) {
            text = ratioValues[ratios.indexOf(col)] || '';
            fill = fills[2];
            if ([3, 6, 10].includes(n)) classes.push('change');
        }

        if (text) {
            td.textContent = text;
            classes.push('filled');
        }
        if (fill) classes.push(fill);
        if (hasRight(n, col)) classes.push('right');
        if (hasBottom(n, col)) classes.push('bottom');
        if (isFlagged(n, col)) classes.push('flag');

        td.className = classes.join(' ');
        tr.appendChild(td);
    });

    body.appendChild(tr);
});
```
